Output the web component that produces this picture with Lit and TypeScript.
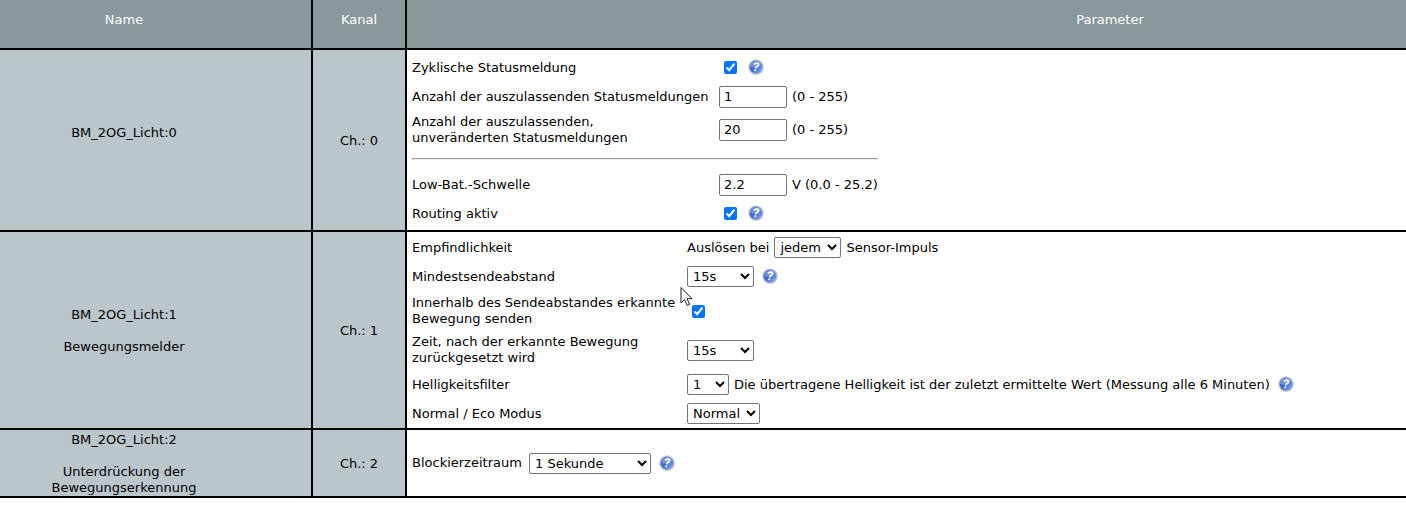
import { LitElement, html, css, nothing } from "lit";
import { customElement, property } from "lit/decorators.js";

@customElement("help-button")
class HelpButton extends LitElement {
  static styles = css`
    :host {
      display: inline-flex;
    }
    .help {
      display: flex;
      padding: 0 0 1px;
      border: 0;
      background: none;
      cursor: pointer;
    }
    .icon {
      display: block;
      width: 16px;
      height: 16px;
    }
  `;

  render() {
    return html`<button class="help" type="button" aria-label="Hilfe">
      <svg class="icon" viewBox="0 0 16 16" aria-hidden="true">
        <defs>
          <linearGradient id="rim" x1="0" y1="0" x2="0" y2="1">
            <stop offset="0" stop-color="#d8d8d8" />
            <stop offset="1" stop-color="#b4b4b4" />
          </linearGradient>
          <linearGradient id="ball" x1="0" y1="0" x2="1" y2="1">
            <stop offset="0" stop-color="#3f62bc" />
            <stop offset="0.45" stop-color="#3c69d0" />
            <stop offset="1" stop-color="#8ab2fa" />
          </linearGradient>
        </defs>
        <circle cx="8" cy="8" r="7.8" fill="url(#rim)" />
        <circle cx="8" cy="8" r="6.4" fill="url(#ball)" />
        <path d="M1.900 7.600A6.200 6.200 0 0 1 13.800 6Q9 6 7 8.200Q4.500 9 1.900 7.600Z" fill="#8ba6e6" opacity="0.7" />
        <path d="M6.200 5.500Q7.200 4 9 4.200Q10.900 4.500 10.400 6.200Q10 7.200 8.700 7.700Q7.900 8.100 7.700 9.300" fill="none" stroke="#fff" stroke-width="1.800" />
        <circle cx="7.200" cy="11.300" r="1" fill="#fff" />
      </svg>
    </button>`;
  }
}

type Control =
  | { kind: "check"; help?: boolean }
  | { kind: "text"; value: string; after: string }
  | { kind: "select"; value: string; size: string; before?: string; after?: string; help?: boolean };

interface Param {
  id: string;
  label: string[];
  control: Control;
  ruleAfter?: boolean;
}

interface Channel {
  index: number;
  lines: string[];
  params: Param[];
}

const CHANNELS: Channel[] = [
  {
    index: 0,
    lines: ["BM_2OG_Licht:0", ""],
    params: [
      { id: "cyclic", label: ["Zyklische Statusmeldung"], control: { kind: "check", help: true } },
      { id: "skip", label: ["Anzahl der auszulassenden Statusmeldungen"], control: { kind: "text", value: "1", after: "(0 - 255)" } },
      { id: "skip-same", label: ["Anzahl der auszulassenden,", "unveränderten Statusmeldungen"], control: { kind: "text", value: "20", after: "(0 - 255)" }, ruleAfter: true },
      { id: "low-bat", label: ["Low-Bat.-Schwelle"], control: { kind: "text", value: "2.2", after: "V (0.0 - 25.2)" } },
      { id: "routing", label: ["Routing aktiv"], control: { kind: "check", help: true } },
    ],
  },
  {
    index: 1,
    lines: ["BM_2OG_Licht:1", "", "Bewegungsmelder"],
    params: [
      { id: "sensitivity", label: ["Empfindlichkeit"], control: { kind: "select", value: "jedem", size: "medium", before: "Auslösen bei", after: "Sensor-Impuls" } },
      { id: "interval", label: ["Mindestsendeabstand"], control: { kind: "select", value: "15s", size: "medium", help: true } },
      { id: "within", label: ["Innerhalb des Sendeabstandes erkannte", "Bewegung senden"], control: { kind: "check" } },
      { id: "reset", label: ["Zeit, nach der erkannte Bewegung", "zurückgesetzt wird"], control: { kind: "select", value: "15s", size: "medium" } },
      { id: "brightness", label: ["Helligkeitsfilter"], control: { kind: "select", value: "1", size: "small", after: "Die übertragene Helligkeit ist der zuletzt ermittelte Wert (Messung alle 6 Minuten)", help: true } },
      { id: "mode", label: ["Normal / Eco Modus"], control: { kind: "select", value: "Normal", size: "mode" } },
    ],
  },
  {
    index: 2,
    lines: ["BM_2OG_Licht:2", "", "Unterdrückung der", "Bewegungserkennung"],
    params: [
      { id: "block", label: ["Blockierzeitraum"], control: { kind: "select", value: "1 Sekunde", size: "large", help: true } },
    ],
  },
];

@customElement("param-list")
class ParamList extends LitElement {
  @property({ attribute: false }) params: Param[] = [];
  @property({ type: Number, reflect: true }) channel = 0;

  static styles = css`
    :host {
      display: block;
      padding: 0 5px;
    }
    .grid {
      display: inline-grid;
      vertical-align: top;
      align-items: center;
      row-gap: 2px;
      white-space: nowrap;
    }
    :host([channel="0"]) .grid {
      grid-template-columns: 307px auto;
      grid-template-rows: 27px 27px 35px 20px 27px 27px;
      padding: 4px 0 3px;
    }
    :host([channel="1"]) .grid {
      grid-template-columns: 275px auto;
      grid-template-rows: 27px 27px 38px 36px 29px 25px;
      padding: 2px 0;
    }
    :host([channel="2"]) .grid {
      grid-template-columns: 117px auto;
    }
    .control {
      display: flex;
      align-items: center;
      gap: 5px;
    }
    .rule {
      grid-column: 1 / -1;
      width: 100%;
      margin: 0;
      box-sizing: border-box;
    }
    .check {
      width: 13px;
      height: 13px;
      margin: 0 6px 0 5px;
    }
    .text,
    .select {
      box-sizing: border-box;
      font: inherit;
      color: #000;
      background: #fff;
      border: 1px solid #767676;
      border-radius: 2px;
    }
    .text {
      width: 68px;
      height: 22px;
      padding: 0 4px;
    }
    .select {
      height: 21px;
      padding: 0 1px;
    }
    .small {
      width: 42px;
    }
    .medium {
      width: 67px;
    }
    .mode {
      width: 73px;
    }
    .large {
      width: 122px;
    }
    .select + help-button,
    .after + help-button {
      margin-left: 3px;
    }
  `;

  private control(id: string, c: Control) {
    if (c.kind === "check") {
      return html`<input class="check" id=${id} type="checkbox" checked />${c.help ? html`<help-button></help-button>` : nothing}`;
    }
    if (c.kind === "text") {
      return html`<input class="text" id=${id} type="text" .value=${c.value} /><span class="after">${c.after}</span>`;
    }
    return html`${c.before ? html`<span>${c.before}</span>` : nothing}<select class="select ${c.size}" id=${id}>
        <option>${c.value}</option></select
      >${c.after ? html`<span class="after">${c.after}</span>` : nothing}${c.help ? html`<help-button></help-button>` : nothing}`;
  }

  render() {
    return html`<div class="grid">
      ${this.params.map(
        (p) => html`
          <label for=${p.id}>${p.label.map((l, i) => (i ? html`<br />${l}` : l))}</label>
          <div class="control">${this.control(p.id, p.control)}</div>
          ${p.ruleAfter ? html`<hr class="rule" />` : nothing}
        `
      )}
    </div>`;
  }
}

@customElement("app-root")
class AppRoot extends LitElement {
  static styles = css`
    :host {
      display: block;
      position: relative;
      overflow: hidden;
      background: #fff;
      color: #000;
      font: 13px/16px Verdana, "DejaVu Sans", sans-serif;
    }
    .channels {
      width: calc(100% + 409px);
      table-layout: fixed;
      border-collapse: separate;
      border-spacing: 0;
    }
    .name-col {
      width: 313px;
    }
    .channel-col {
      width: 94px;
    }
    .head,
    .cell {
      padding: 2px 0 0;
      border-right: 2px solid #000;
      border-bottom: 2px solid #000;
      text-align: center;
      font-weight: normal;
    }
    .head {
      padding: 12px 0 20px;
      background: #89989b;
      color: #fff;
    }
    .cell {
      background: #bbc6cb;
    }
    .name {
      padding-right: 63px;
    }
    .params {
      padding: 0;
      background: #fff;
      text-align: left;
    }
    .line {
      min-height: 16px;
    }
    .pointer {
      position: absolute;
      left: 680px;
      top: 286px;
      width: 13px;
      height: 21px;
      pointer-events: none;
    }
  `;

  render() {
    return html`
      <table class="channels">
        <colgroup>
          <col class="name-col" />
          <col class="channel-col" />
          <col />
        </colgroup>
        <thead>
          <tr>
            <th class="head name" scope="col">Name</th>
            <th class="head" scope="col">Kanal</th>
            <th class="head" scope="col">Parameter</th>
          </tr>
        </thead>
        <tbody>
          ${CHANNELS.map(
            (c) => html`<tr>
              <td class="cell name">${c.lines.map((l) => html`<div class="line">${l}</div>`)}</td>
              <td class="cell">Ch.: ${c.index}</td>
              <td class="cell params"><param-list .params=${c.params} .channel=${c.index}></param-list></td>
            </tr>`
          )}
        </tbody>
      </table>
      <svg class="pointer" viewBox="0 0 13 21" aria-hidden="true">
        <path d="M1 1.500V17L4.500 13.500L7.200 19.500L9.600 18.400L7 12.700H12Z" fill="#fff" stroke="#1a1a2a" stroke-width="1" />
      </svg>
    `;
  }
}
